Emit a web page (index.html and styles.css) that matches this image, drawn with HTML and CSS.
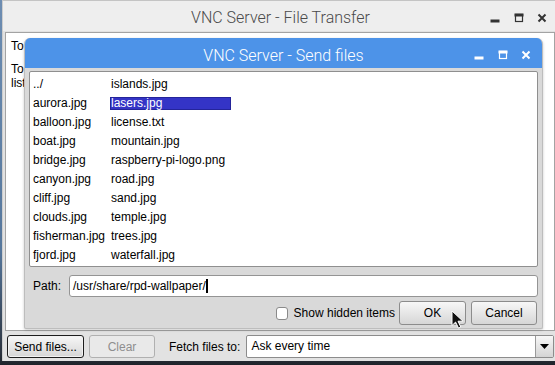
FILE: index.html
```html
<!DOCTYPE html>
<html>
<head>
<meta charset="utf-8">
<title>VNC Server - File Transfer</title>
<link rel="stylesheet" href="styles.css">
</head>
<body>
<div class="desktop">

  <!-- main transfer window -->
  <div class="win outer">
    <div class="titlebar">
      <span class="title">VNC Server - File Transfer</span>
      <div class="controls">
        <span class="ctl"><svg width="10" height="10" viewBox="0 0 10 10"><rect x="1" y="7" width="8" height="2"/></svg></span>
        <span class="ctl"><svg width="10" height="10" viewBox="0 0 10 10"><rect x="1" y="1" width="8" height="2"/><rect class="ol" x="1.5" y="1.5" width="7" height="7"/></svg></span>
        <span class="ctl"><svg width="10" height="10" viewBox="0 0 10 10"><path d="M1.5 1.5l7 7M8.5 1.5l-7 7" stroke-width="2"/></svg></span>
      </div>
    </div>
    <div class="client">
      <div class="pane">
        <p>To send files to VNC Viewer, click Send files... and choose the files you want to send.</p>
        <p>To fetch files from VNC Viewer, choose a destination folder from the drop-down<br>list below, then send the files from VNC Viewer.</p>
      </div>
      <div class="bar">
        <button class="btn default">Send files...</button>
        <button class="btn" disabled>Clear</button>
        <span class="bar-label">Fetch files to:</span>
        <div class="combo">
          <span class="combo-text">Ask every time</span>
          <span class="combo-arrow"><svg width="9" height="5" viewBox="0 0 9 5"><path d="M0 0h9l-4.5 5z"/></svg></span>
        </div>
      </div>
    </div>
  </div>

  <!-- send files dialog -->
  <div class="win dialog">
    <div class="titlebar blue">
      <span class="title">VNC Server - Send files</span>
      <div class="controls">
        <span class="ctl"><svg width="10" height="10" viewBox="0 0 10 10"><rect x="1" y="7" width="8" height="2"/></svg></span>
        <span class="ctl"><svg width="10" height="10" viewBox="0 0 10 10"><rect x="1" y="1" width="8" height="2"/><rect class="ol" x="1.5" y="1.5" width="7" height="7"/></svg></span>
        <span class="ctl"><svg width="10" height="10" viewBox="0 0 10 10"><path d="M1.5 1.5l7 7M8.5 1.5l-7 7" stroke-width="2"/></svg></span>
      </div>
    </div>
    <div class="dlg-body">
      <div class="listbox">
        <span class="item">../</span>
        <span class="item">aurora.jpg</span>
        <span class="item">balloon.jpg</span>
        <span class="item">boat.jpg</span>
        <span class="item">bridge.jpg</span>
        <span class="item">canyon.jpg</span>
        <span class="item">cliff.jpg</span>
        <span class="item">clouds.jpg</span>
        <span class="item">fisherman.jpg</span>
        <span class="item">fjord.jpg</span>
        <span class="item">islands.jpg</span>
        <span class="item selected">lasers.jpg</span>
        <span class="item">license.txt</span>
        <span class="item">mountain.jpg</span>
        <span class="item">raspberry-pi-logo.png</span>
        <span class="item">road.jpg</span>
        <span class="item">sand.jpg</span>
        <span class="item">temple.jpg</span>
        <span class="item">trees.jpg</span>
        <span class="item">waterfall.jpg</span>
      </div>
      <div class="path-row">
        <span class="path-label">Path:</span>
        <div class="field"><span class="caret">/usr/share/rpd-wallpaper/</span></div>
      </div>
      <div class="actions">
        <label class="check"><span class="box"></span>Show hidden items</label>
        <button class="btn ok">OK</button>
        <button class="btn cancel">Cancel</button>
      </div>
    </div>
  </div>

  <svg class="pointer" width="13" height="19" viewBox="0 0 13 19"><path d="M1 1v14.5l3.6-3.4 2.9 6 2.3-1.1-2.8-5.8h5z" fill="#111" stroke="#fff" stroke-width="1"/></svg>
</div>
</body>
</html>
```

FILE: styles.css
```css
* { box-sizing: border-box; }

body {
  margin: 0;
  font-family: "Liberation Sans", Arial, sans-serif;
  font-size: 12px;
  color: #000;
}

.desktop {
  position: relative;
  width: 555px;
  height: 365px;
  overflow: hidden;
  background: linear-gradient(#6d8db2 0, #56779c 250px, #2c3440 352px, #1f232a 365px);
}

.win { position: absolute; display: flex; flex-direction: column; }

.outer {
  left: 2px;
  top: 0;
  width: 556px;
  height: 361px;
  background: #e2e2e2;
  border-top: 1px solid #c4c4c4;
  border-left: 1px solid #cdcdcd;
}

.titlebar {
  display: grid;
  align-items: center;
  height: 30px;
  background: #eeeeee;
  flex: none;
}
.titlebar > * { grid-area: 1 / 1; }
.title {
  justify-self: center;
  font-family: Roboto, "Liberation Sans", sans-serif;
  font-weight: 300;
  font-size: 16px;
  color: #4a4a4a;
  padding-top: 3px;
}
.controls {
  justify-self: end;
  display: flex;
  padding: 3px 4px 0 0;
}
.ctl {
  width: 23.5px;
  display: flex;
  justify-content: center;
}
.ctl svg { fill: #333; stroke: #333; }
.ctl .ol { fill: none; stroke-width: 1.2; }

.client { flex: 1; display: flex; flex-direction: column; padding-top: 1px; }

.pane {
  flex: 1;
  margin: 0 3px 0 2px;
  background: #fff;
  border: 1px solid #a3a3a3;
  padding: 6px 5px;
  overflow: hidden;
}
.pane p { margin: 0 0 9px; line-height: 14px; white-space: nowrap; }

.bar {
  display: flex;
  align-items: center;
  padding: 4px 4px 3px 4px;
}

.btn {
  height: 23px;
  font: 12px "Liberation Sans", Arial, sans-serif;
  color: #000;
  border: 1px solid #8c8c8c;
  border-radius: 3px;
  background: linear-gradient(#f7f7f7, #d6d6d6);
  padding: 0;
}
.btn.default {
  width: 77px;
  border-color: #1e1e1e;
  box-shadow: inset 0 0 0 1px #f2f2f2;
}
.btn[disabled] {
  width: 66px;
  margin-left: 5px;
  color: #8e8e8e;
  background: #e9e9e9;
  border-color: #b0b0b0;
}
.bar-label { margin: 0 6px 0 14px; }

.combo {
  flex: 1;
  height: 23px;
  display: flex;
  background: #fff;
  border: 1px solid #8c8c8c;
  border-radius: 2px;
}
.combo-text { flex: 1; padding-left: 4px; line-height: 21px; }
.combo-arrow {
  width: 18px;
  display: flex;
  align-items: center;
  justify-content: center;
  border-left: 1px solid #9a9a9a;
  background: linear-gradient(#f7f7f7, #d4d4d4);
}
.combo-arrow svg { fill: #000; }

/* send files dialog */
.dialog {
  left: 24px;
  top: 38px;
  width: 519px;
  height: 291px;
  background: #d9d9d9;
  border: 1px solid #bdbdbd;
  border-top: 0;
  border-radius: 6px 6px 2px 2px;
  overflow: hidden;
  box-shadow: 0 1px 3px rgba(0, 0, 0, 0.2);
}
.titlebar.blue { background: #4d93e8; }
.titlebar.blue .title { color: #fff; padding-top: 4px; }
.titlebar.blue .controls { padding-top: 4px; }
.titlebar.blue .ctl svg { fill: #fff; stroke: #fff; }
.titlebar.blue .ctl .ol { fill: none; }

.dlg-body {
  flex: 1;
  display: flex;
  flex-direction: column;
  padding: 3px 4px 3px 4px;
}

.listbox {
  height: 196px;
  background: #fff;
  border: 1px solid #8f8f8f;
  border-radius: 2px;
  padding: 6px 0 0 2px;
  display: grid;
  grid-template-columns: 78px 121px;
  grid-template-rows: repeat(10, 13px);
  grid-auto-flow: column;
  row-gap: 6px;
}
.item {
  line-height: 13px;
  padding-left: 1px;
  white-space: nowrap;
}
.item.selected {
  background: #3434c6;
  color: #fff;
  box-shadow: inset 0 0 0 1px #24249a;
}

.path-row {
  display: flex;
  align-items: center;
  margin-top: 8px;
  height: 22px;
}
.path-label { width: 40px; padding-left: 4px; }
.field {
  flex: 1;
  height: 22px;
  background: #fff;
  border: 1px solid #949494;
  border-radius: 3px;
  padding-left: 3px;
  line-height: 20px;
}
.caret { border-right: 2px solid #000; }

.actions {
  display: flex;
  align-items: center;
  justify-content: flex-end;
  margin-top: 4px;
  height: 24px;
  padding-right: 1px;
}
.check { display: flex; align-items: center; margin-right: 4px; }
.box {
  width: 12px;
  height: 13px;
  border: 1px solid #8a8a8a;
  border-radius: 3px;
  background: #fff;
  margin-right: 6px;
}
.btn.ok { width: 67px; height: 24px; }
.btn.cancel { width: 66px; height: 24px; margin-left: 5px; }

.pointer { position: absolute; left: 451px; top: 310px; }
```
